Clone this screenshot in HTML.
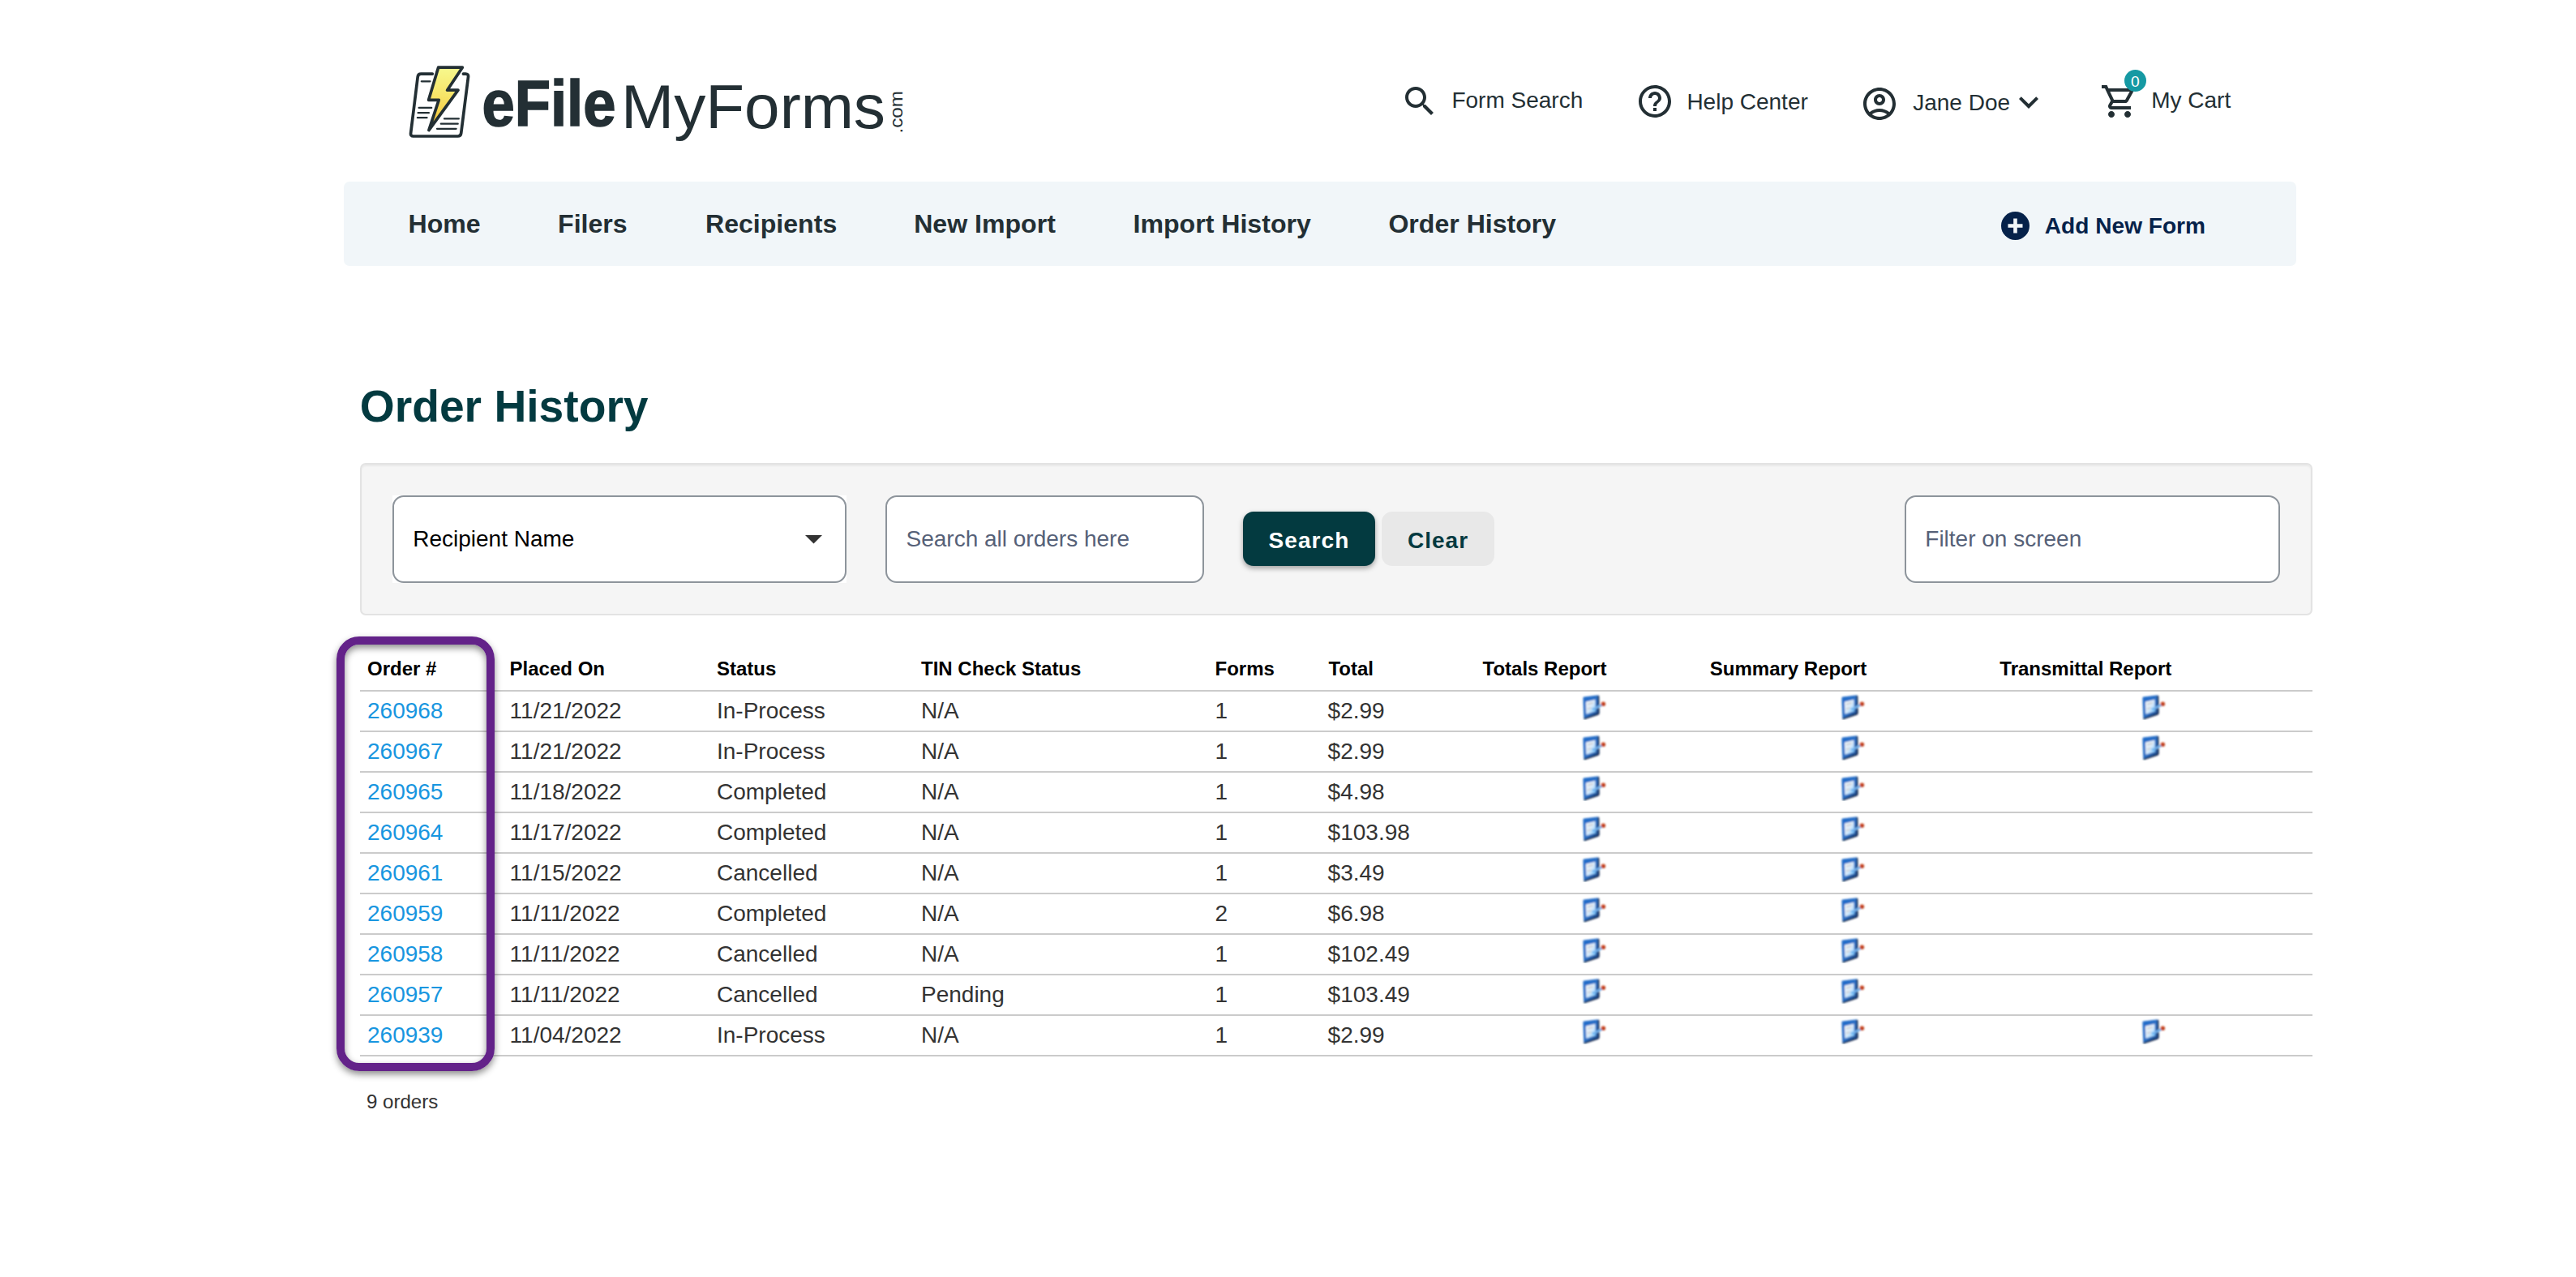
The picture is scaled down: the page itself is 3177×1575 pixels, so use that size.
<!DOCTYPE html>
<html lang="en"><head><meta charset="utf-8"><title>Order History - eFileMyForms</title>
<style>
html,body{margin:0;padding:0;background:#fff}
body{width:3177px;height:1575px;position:relative;overflow:hidden;font-family:"Liberation Sans", Arial, Helvetica, sans-serif}
.abs{position:absolute;display:block}
.t{position:absolute;white-space:nowrap;line-height:1;font-family:"Liberation Sans", Arial, Helvetica, sans-serif}
.inp{box-sizing:border-box;border:2px solid #8d949b;border-radius:14px;background:#fff}
.ln{left:444px;width:2408px;height:2px;background:#cbcbcb}
</style></head><body>
<svg class="abs" style="left:490px;top:70px" width="640" height="130" viewBox="490 70 640 130">
<defs><linearGradient id="bolt" x1="0" y1="0" x2="0" y2="1"><stop offset="0" stop-color="#f7f98e"/><stop offset="0.45" stop-color="#f7e468"/><stop offset="1" stop-color="#f7bf2d"/></linearGradient></defs>
<g fill="none" stroke="#232f34" stroke-linecap="round" stroke-linejoin="round">
<path d="M533.3 91.1 H519.3 Q515.6 91.1 515.2 94.8 L506.6 164.3 Q506.1 168 509.9 168 H564.6 Q568.3 168 568.7 164.3 L577.5 94.8 Q577.9 91.1 574.2 91.1 H571.4" stroke-width="3.7"/>
<path d="M540.6 83.2 H570.3 L551.6 111.2 H565 L528.9 160.6 L541.2 123.3 H528.6 Z" fill="url(#bolt)" stroke-width="3.7"/>
<g stroke-width="2.3">
<path d="M519.8 100.3 H530.5"/>
<path d="M516.6 132.9 H532.2"/><path d="M515.6 139.2 H528.9"/><path d="M514.9 145.2 H526.5"/>
<path d="M548 146.4 H565.8"/><path d="M543.8 152.7 H564.7"/><path d="M539 158.8 H562.6"/>
</g></g>
<text x="594.5" y="155.4" font-family='"Liberation Sans", Arial, sans-serif' font-weight="700" font-size="78.8" fill="#232f34" stroke="#232f34" stroke-width="1.6" textLength="165" lengthAdjust="spacingAndGlyphs">eFile</text>
<text x="766" y="158.2" font-family='"Liberation Sans", Arial, sans-serif' font-weight="400" font-size="76" fill="#232f34" textLength="326" lengthAdjust="spacingAndGlyphs">MyForms</text>
<text transform="translate(1113.4 164.6) rotate(-90)" font-family='"Liberation Sans", Arial, sans-serif' font-size="22.5" fill="#232f34" textLength="52.5" lengthAdjust="spacingAndGlyphs">.com</text>
</svg>
<svg class="abs" style="left:1727.0px;top:101.0px" width="48" height="48" viewBox="0 0 24 24"><path fill="#232f34" d="M15.5 14h-.79l-.28-.27C15.41 12.59 16 11.11 16 9.5 16 5.91 13.09 3 9.5 3S3 5.91 3 9.5 5.91 16 9.5 16c1.61 0 3.09-.59 4.23-1.57l.27.28v.79l5 4.99L20.49 19l-4.99-5zm-6 0C7.01 14 5 11.99 5 9.5S7.01 5 9.5 5 14 7.01 14 9.5 11.99 14 9.5 14z"/></svg>
<span class="t " style="left:1790.4px;top:109.80px;font-size:28px;font-weight:400;color:#232f34;">Form Search</span>
<svg class="abs" style="left:2016.9px;top:101.3px" width="48" height="48" viewBox="0 0 24 24"><path fill="#232f34" d="M11 18h2v-2h-2v2zm1-16C6.48 2 2 6.48 2 12s4.48 10 10 10 10-4.48 10-10S17.52 2 12 2zm0 18c-4.41 0-8-3.59-8-8s3.590-8 8-8 8 3.590 8 8-3.590 8-8 8zm0-14c-2.210 0-4 1.790-4 4h2c0-1.100.9-2 2-2s2 .9 2 2c0 2-3 1.750-3 5h2c0-2.250 3-2.500 3-5 0-2.210-1.790-4-4-4z"/></svg>
<span class="t " style="left:2080.4px;top:111.50px;font-size:28px;font-weight:400;color:#232f34;">Help Center</span>
<svg class="abs" style="left:2294.2px;top:104.2px" width="48" height="48" viewBox="0 0 24 24"><path fill="#232f34" d="M12 2C6.48 2 2 6.48 2 12s4.48 10 10 10 10-4.48 10-10S17.52 2 12 2zM7.35 18.5C8.66 17.56 10.26 17 12 17s3.340.56 4.650 1.500c-1.310.94-2.910 1.500-4.650 1.500s-3.340-.56-4.650-1.500zm10.790-1.380C16.450 15.800 14.320 15 12 15s-4.450.8-6.140 2.120C4.700 15.730 4 13.950 4 12c0-4.420 3.580-8 8-8s8 3.580 8 8c0 1.950-.7 3.730-1.860 5.120zM12 6c-1.930 0-3.500 1.570-3.500 3.500S10.070 13 12 13s3.500-1.570 3.500-3.500S13.930 6 12 6zm0 5c-.83 0-1.500-.67-1.500-1.500S11.170 8 12 8s1.500.67 1.500 1.500S12.830 11 12 11z"/></svg>
<span class="t " style="left:2359.2px;top:112.60px;font-size:28px;font-weight:400;color:#232f34;">Jane Doe</span>
<svg class="abs" style="left:2478.1px;top:101.6px" width="48" height="48" viewBox="0 0 24 24"><path fill="#232f34" d="M16.59 8.59L12 13.17 7.41 8.59 6 10l6 6 6-6z"/></svg>
<svg class="abs" style="left:2590.1px;top:101.0px" width="48" height="48" viewBox="0 0 24 24"><path fill="#232f34" d="M15.55 13c.75 0 1.41-.41 1.75-1.030l3.580-6.490c.37-.66-.11-1.480-.870-1.480H5.210l-.94-2H1v2h2l3.600 7.590-1.350 2.440C4.520 15.370 5.480 17 7 17h12v-2H7l1.100-2h7.450zM6.160 6h12.150l-2.760 5H8.530L6.160 6zM7 18c-1.100 0-1.990.9-1.990 2S5.900 22 7 22s2-.9 2-2-.9-2-2-2zm10 0c-1.100 0-1.990.9-1.990 2s.89 2 1.990 2 2-.9 2-2-.9-2-2-2z"/></svg>
<div class="abs" style="left:2619.9px;top:86.2px;width:27.2px;height:27.2px;border-radius:50%;background:#1599a3"></div>
<span class="t " style="left:2627.9px;top:91.00px;font-size:19.25px;font-weight:400;color:#fff;">0</span>
<span class="t " style="left:2653.2px;top:110.10px;font-size:28px;font-weight:400;color:#232f34;">My Cart</span>
<div class="abs" style="left:424px;top:224px;width:2408px;height:104px;border-radius:7px;background:#f1f6f9"></div>
<span class="t " style="left:503.5px;top:259.83px;font-size:32.1px;font-weight:700;color:#232f34;">Home</span>
<span class="t " style="left:688.1px;top:259.83px;font-size:32.1px;font-weight:700;color:#232f34;">Filers</span>
<span class="t " style="left:870.0px;top:259.83px;font-size:32.1px;font-weight:700;color:#232f34;">Recipients</span>
<span class="t " style="left:1127.2px;top:259.83px;font-size:32.1px;font-weight:700;color:#232f34;">New Import</span>
<span class="t " style="left:1397.6px;top:259.83px;font-size:32.1px;font-weight:700;color:#232f34;">Import History</span>
<span class="t " style="left:1712.4px;top:259.83px;font-size:32.1px;font-weight:700;color:#232f34;">Order History</span>
<svg class="abs" style="left:2468.4px;top:260.5px" width="35" height="35" viewBox="0 0 35 35"><circle cx="17.5" cy="17.5" r="17.5" fill="#06224a"/><path d="M8.5 17.5H26.5M17.5 8.5V26.5" stroke="#f1f6f9" stroke-width="4.6"/></svg>
<span class="t " style="left:2521.8px;top:264.71px;font-size:28.1px;font-weight:700;color:#06224a;">Add New Form</span>
<span class="t " style="left:443.8px;top:474.37px;font-size:55.2px;font-weight:700;color:#033a40;">Order History</span>
<div class="abs" style="left:444px;top:571px;width:2408px;height:188px;box-sizing:border-box;border:2px solid #e3e3e3;border-radius:7px;background:#f5f5f5;box-shadow:inset 0 2px 2px rgba(0,0,0,.05)"></div>
<div class="abs" style="left:484px;top:611px;width:560px;height:107.6px;background:#fff"></div><div class="abs inp" style="left:484px;top:611px;width:560px;height:107.6px"></div>
<span class="t " style="left:509.2px;top:650.50px;font-size:28px;font-weight:400;color:#000;">Recipient Name</span>
<svg class="abs" style="left:993.4px;top:660.4px" width="21" height="11" viewBox="0 0 21 11"><path d="M0 0H21L10.5 10.6Z" fill="#333"/></svg>
<div class="abs inp" style="left:1092.2px;top:611px;width:392.6px;height:107.6px"></div>
<span class="t " style="left:1117.5px;top:650.50px;font-size:28px;font-weight:400;color:#566178;">Search all orders here</span>
<div class="abs" style="left:1533px;top:631px;width:163px;height:67px;border-radius:13px;background:#033a40;box-shadow:0 3px 6px rgba(0,0,0,.35)"></div>
<span class="t " style="left:1564.6px;top:652.80px;font-size:28px;font-weight:700;color:#fff;letter-spacing:1.05px">Search</span>
<div class="abs" style="left:1704px;top:631px;width:139px;height:67px;border-radius:13px;background:#e8e8e8"></div>
<span class="t " style="left:1735.9px;top:652.80px;font-size:28px;font-weight:700;color:#033a40;letter-spacing:1.05px">Clear</span>
<div class="abs inp" style="left:2349.2px;top:611px;width:462.8px;height:107.6px"></div>
<span class="t " style="left:2374.3px;top:650.70px;font-size:28px;font-weight:400;color:#566178;">Filter on screen</span>
<span class="t " style="left:453.0px;top:812.68px;font-size:24.0px;font-weight:700;color:#000;">Order #</span>
<span class="t " style="left:628.6px;top:812.68px;font-size:24.0px;font-weight:700;color:#000;">Placed On</span>
<span class="t " style="left:884.0px;top:812.68px;font-size:24.0px;font-weight:700;color:#000;">Status</span>
<span class="t " style="left:1136.0px;top:812.68px;font-size:24.0px;font-weight:700;color:#000;">TIN Check Status</span>
<span class="t " style="left:1498.5px;top:812.68px;font-size:24.0px;font-weight:700;color:#000;">Forms</span>
<span class="t " style="left:1638.4px;top:812.68px;font-size:24.0px;font-weight:700;color:#000;">Total</span>
<span class="t " style="left:1828.5px;top:812.68px;font-size:24.0px;font-weight:700;color:#000;">Totals Report</span>
<span class="t " style="left:2108.8px;top:812.68px;font-size:24.0px;font-weight:700;color:#000;">Summary Report</span>
<span class="t " style="left:2466.3px;top:812.68px;font-size:24.0px;font-weight:700;color:#000;">Transmittal Report</span>
<svg width="0" height="0" style="position:absolute"><defs>
<linearGradient id="rg1" x1="0" y1="0" x2="1" y2="1"><stop offset="0" stop-color="#1f6bcb"/><stop offset="0.55" stop-color="#2b6fc4"/><stop offset="1" stop-color="#1a3a70"/></linearGradient>
<linearGradient id="rg2" x1="0" y1="0" x2="1" y2="1"><stop offset="0" stop-color="#f4f5f7"/><stop offset="0.5" stop-color="#dcecfb"/><stop offset="0.85" stop-color="#8fd0ff"/><stop offset="1" stop-color="#5cbcff"/></linearGradient>
<filter id="rb" x="-20%" y="-20%" width="140%" height="140%"><feGaussianBlur stdDeviation="0.9"/></filter>
<g id="rep">
<path d="M3.6 5.4 Q2.3 5.6 2.4 6.9 L3.2 31 Q3.3 32.6 4.8 32.1 L20.8 26.8 Q21.9 26.4 21.9 25.2 L21.5 4.8 Q21.4 3.3 19.9 3.5 Z" fill="url(#rg1)"/>
<path d="M21.4 4.6 L21.8 25.6 Q21.8 26.5 20.8 26.9 L4.2 32.3" fill="none" stroke="#15264a" stroke-width="1.8" stroke-linecap="round"/>
<path d="M5.9 11.6 L17.4 8.7 L18.1 23.2 L6.3 26.7 Z" fill="url(#rg2)"/>
<path d="M8 14.8 L14.6 12.8 M8 20.3 L12.6 19" stroke="#cfd2d6" stroke-width="2.2"/>
<path d="M15.6 20.4 L25.4 15.6" stroke="#74b0ea" stroke-width="2.8" stroke-linecap="round"/>
<path d="M14.2 20.2 L17 21.6" stroke="#6db8f5" stroke-width="2" stroke-linecap="round"/>
<circle cx="27.4" cy="14.3" r="2.7" fill="#c9431f"/>
<circle cx="28.1" cy="15" r="1.1" fill="#a2381a"/>
</g></defs></svg>
<div class="abs ln" style="top:851px"></div>
<span class="t " style="left:453.0px;top:862.70px;font-size:28px;font-weight:400;color:#1896e0;">260968</span>
<span class="t " style="left:628.6px;top:862.70px;font-size:28px;font-weight:400;color:#333;">11/21/2022</span>
<span class="t " style="left:884.0px;top:862.70px;font-size:28px;font-weight:400;color:#333;">In-Process</span>
<span class="t " style="left:1136.0px;top:862.70px;font-size:28px;font-weight:400;color:#333;">N/A</span>
<span class="t " style="left:1498.5px;top:862.70px;font-size:28px;font-weight:400;color:#333;">1</span>
<span class="t " style="left:1637.6px;top:862.70px;font-size:28px;font-weight:400;color:#333;">$2.99</span>
<svg class="abs" style="left:1950px;top:854px" width="32" height="34" viewBox="0 0 32 34"><use href="#rep" filter="url(#rb)"/></svg>
<svg class="abs" style="left:2268.5px;top:854px" width="32" height="34" viewBox="0 0 32 34"><use href="#rep" filter="url(#rb)"/></svg>
<svg class="abs" style="left:2640px;top:854px" width="32" height="34" viewBox="0 0 32 34"><use href="#rep" filter="url(#rb)"/></svg>
<div class="abs ln" style="top:901px"></div>
<span class="t " style="left:453.0px;top:912.70px;font-size:28px;font-weight:400;color:#1896e0;">260967</span>
<span class="t " style="left:628.6px;top:912.70px;font-size:28px;font-weight:400;color:#333;">11/21/2022</span>
<span class="t " style="left:884.0px;top:912.70px;font-size:28px;font-weight:400;color:#333;">In-Process</span>
<span class="t " style="left:1136.0px;top:912.70px;font-size:28px;font-weight:400;color:#333;">N/A</span>
<span class="t " style="left:1498.5px;top:912.70px;font-size:28px;font-weight:400;color:#333;">1</span>
<span class="t " style="left:1637.6px;top:912.70px;font-size:28px;font-weight:400;color:#333;">$2.99</span>
<svg class="abs" style="left:1950px;top:904px" width="32" height="34" viewBox="0 0 32 34"><use href="#rep" filter="url(#rb)"/></svg>
<svg class="abs" style="left:2268.5px;top:904px" width="32" height="34" viewBox="0 0 32 34"><use href="#rep" filter="url(#rb)"/></svg>
<svg class="abs" style="left:2640px;top:904px" width="32" height="34" viewBox="0 0 32 34"><use href="#rep" filter="url(#rb)"/></svg>
<div class="abs ln" style="top:951px"></div>
<span class="t " style="left:453.0px;top:962.70px;font-size:28px;font-weight:400;color:#1896e0;">260965</span>
<span class="t " style="left:628.6px;top:962.70px;font-size:28px;font-weight:400;color:#333;">11/18/2022</span>
<span class="t " style="left:884.0px;top:962.70px;font-size:28px;font-weight:400;color:#333;">Completed</span>
<span class="t " style="left:1136.0px;top:962.70px;font-size:28px;font-weight:400;color:#333;">N/A</span>
<span class="t " style="left:1498.5px;top:962.70px;font-size:28px;font-weight:400;color:#333;">1</span>
<span class="t " style="left:1637.6px;top:962.70px;font-size:28px;font-weight:400;color:#333;">$4.98</span>
<svg class="abs" style="left:1950px;top:954px" width="32" height="34" viewBox="0 0 32 34"><use href="#rep" filter="url(#rb)"/></svg>
<svg class="abs" style="left:2268.5px;top:954px" width="32" height="34" viewBox="0 0 32 34"><use href="#rep" filter="url(#rb)"/></svg>
<div class="abs ln" style="top:1001px"></div>
<span class="t " style="left:453.0px;top:1012.70px;font-size:28px;font-weight:400;color:#1896e0;">260964</span>
<span class="t " style="left:628.6px;top:1012.70px;font-size:28px;font-weight:400;color:#333;">11/17/2022</span>
<span class="t " style="left:884.0px;top:1012.70px;font-size:28px;font-weight:400;color:#333;">Completed</span>
<span class="t " style="left:1136.0px;top:1012.70px;font-size:28px;font-weight:400;color:#333;">N/A</span>
<span class="t " style="left:1498.5px;top:1012.70px;font-size:28px;font-weight:400;color:#333;">1</span>
<span class="t " style="left:1637.6px;top:1012.70px;font-size:28px;font-weight:400;color:#333;">$103.98</span>
<svg class="abs" style="left:1950px;top:1004px" width="32" height="34" viewBox="0 0 32 34"><use href="#rep" filter="url(#rb)"/></svg>
<svg class="abs" style="left:2268.5px;top:1004px" width="32" height="34" viewBox="0 0 32 34"><use href="#rep" filter="url(#rb)"/></svg>
<div class="abs ln" style="top:1051px"></div>
<span class="t " style="left:453.0px;top:1062.70px;font-size:28px;font-weight:400;color:#1896e0;">260961</span>
<span class="t " style="left:628.6px;top:1062.70px;font-size:28px;font-weight:400;color:#333;">11/15/2022</span>
<span class="t " style="left:884.0px;top:1062.70px;font-size:28px;font-weight:400;color:#333;">Cancelled</span>
<span class="t " style="left:1136.0px;top:1062.70px;font-size:28px;font-weight:400;color:#333;">N/A</span>
<span class="t " style="left:1498.5px;top:1062.70px;font-size:28px;font-weight:400;color:#333;">1</span>
<span class="t " style="left:1637.6px;top:1062.70px;font-size:28px;font-weight:400;color:#333;">$3.49</span>
<svg class="abs" style="left:1950px;top:1054px" width="32" height="34" viewBox="0 0 32 34"><use href="#rep" filter="url(#rb)"/></svg>
<svg class="abs" style="left:2268.5px;top:1054px" width="32" height="34" viewBox="0 0 32 34"><use href="#rep" filter="url(#rb)"/></svg>
<div class="abs ln" style="top:1101px"></div>
<span class="t " style="left:453.0px;top:1112.70px;font-size:28px;font-weight:400;color:#1896e0;">260959</span>
<span class="t " style="left:628.6px;top:1112.70px;font-size:28px;font-weight:400;color:#333;">11/11/2022</span>
<span class="t " style="left:884.0px;top:1112.70px;font-size:28px;font-weight:400;color:#333;">Completed</span>
<span class="t " style="left:1136.0px;top:1112.70px;font-size:28px;font-weight:400;color:#333;">N/A</span>
<span class="t " style="left:1498.5px;top:1112.70px;font-size:28px;font-weight:400;color:#333;">2</span>
<span class="t " style="left:1637.6px;top:1112.70px;font-size:28px;font-weight:400;color:#333;">$6.98</span>
<svg class="abs" style="left:1950px;top:1104px" width="32" height="34" viewBox="0 0 32 34"><use href="#rep" filter="url(#rb)"/></svg>
<svg class="abs" style="left:2268.5px;top:1104px" width="32" height="34" viewBox="0 0 32 34"><use href="#rep" filter="url(#rb)"/></svg>
<div class="abs ln" style="top:1151px"></div>
<span class="t " style="left:453.0px;top:1162.70px;font-size:28px;font-weight:400;color:#1896e0;">260958</span>
<span class="t " style="left:628.6px;top:1162.70px;font-size:28px;font-weight:400;color:#333;">11/11/2022</span>
<span class="t " style="left:884.0px;top:1162.70px;font-size:28px;font-weight:400;color:#333;">Cancelled</span>
<span class="t " style="left:1136.0px;top:1162.70px;font-size:28px;font-weight:400;color:#333;">N/A</span>
<span class="t " style="left:1498.5px;top:1162.70px;font-size:28px;font-weight:400;color:#333;">1</span>
<span class="t " style="left:1637.6px;top:1162.70px;font-size:28px;font-weight:400;color:#333;">$102.49</span>
<svg class="abs" style="left:1950px;top:1154px" width="32" height="34" viewBox="0 0 32 34"><use href="#rep" filter="url(#rb)"/></svg>
<svg class="abs" style="left:2268.5px;top:1154px" width="32" height="34" viewBox="0 0 32 34"><use href="#rep" filter="url(#rb)"/></svg>
<div class="abs ln" style="top:1201px"></div>
<span class="t " style="left:453.0px;top:1212.70px;font-size:28px;font-weight:400;color:#1896e0;">260957</span>
<span class="t " style="left:628.6px;top:1212.70px;font-size:28px;font-weight:400;color:#333;">11/11/2022</span>
<span class="t " style="left:884.0px;top:1212.70px;font-size:28px;font-weight:400;color:#333;">Cancelled</span>
<span class="t " style="left:1136.0px;top:1212.70px;font-size:28px;font-weight:400;color:#333;">Pending</span>
<span class="t " style="left:1498.5px;top:1212.70px;font-size:28px;font-weight:400;color:#333;">1</span>
<span class="t " style="left:1637.6px;top:1212.70px;font-size:28px;font-weight:400;color:#333;">$103.49</span>
<svg class="abs" style="left:1950px;top:1204px" width="32" height="34" viewBox="0 0 32 34"><use href="#rep" filter="url(#rb)"/></svg>
<svg class="abs" style="left:2268.5px;top:1204px" width="32" height="34" viewBox="0 0 32 34"><use href="#rep" filter="url(#rb)"/></svg>
<div class="abs ln" style="top:1251px"></div>
<span class="t " style="left:453.0px;top:1262.70px;font-size:28px;font-weight:400;color:#1896e0;">260939</span>
<span class="t " style="left:628.6px;top:1262.70px;font-size:28px;font-weight:400;color:#333;">11/04/2022</span>
<span class="t " style="left:884.0px;top:1262.70px;font-size:28px;font-weight:400;color:#333;">In-Process</span>
<span class="t " style="left:1136.0px;top:1262.70px;font-size:28px;font-weight:400;color:#333;">N/A</span>
<span class="t " style="left:1498.5px;top:1262.70px;font-size:28px;font-weight:400;color:#333;">1</span>
<span class="t " style="left:1637.6px;top:1262.70px;font-size:28px;font-weight:400;color:#333;">$2.99</span>
<svg class="abs" style="left:1950px;top:1254px" width="32" height="34" viewBox="0 0 32 34"><use href="#rep" filter="url(#rb)"/></svg>
<svg class="abs" style="left:2268.5px;top:1254px" width="32" height="34" viewBox="0 0 32 34"><use href="#rep" filter="url(#rb)"/></svg>
<svg class="abs" style="left:2640px;top:1254px" width="32" height="34" viewBox="0 0 32 34"><use href="#rep" filter="url(#rb)"/></svg>
<div class="abs ln" style="top:1301px"></div>
<span class="t " style="left:451.9px;top:1347.40px;font-size:24.1px;font-weight:400;color:#333;">9 orders</span>
<div class="abs" style="left:415px;top:785px;width:195px;height:535.5px;box-sizing:border-box;border:10.2px solid #632289;border-radius:28px;box-shadow:0 4px 9px rgba(0,0,0,.45), inset 0 4px 9px rgba(0,0,0,.45)"></div>
</body></html>
